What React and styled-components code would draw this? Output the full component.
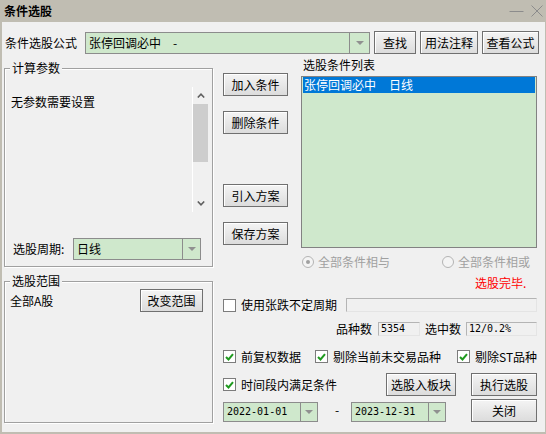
import React from 'react';
import styled, { createGlobalStyle } from 'styled-components';

const Global = createGlobalStyle`
  html, body { margin: 0; padding: 0; background: #c0bdb2; }
  body {
    font-family: "Noto Sans CJK SC", "Liberation Sans", sans-serif;
    font-size: 12px;
    color: #000;
  }
  * { box-sizing: border-box; }
`;

const Window = styled.div`
  width: 546px;
  height: 434px;
  background: #c0bdb2;
  display: flex;
  flex-direction: column;
  padding: 0 1px 2px 2px;
`;

const TitleBar = styled.div`
  height: 22px;
  display: flex;
  align-items: center;
  padding-left: 2px;
  font-weight: bold;
  font-size: 12px;
  line-height: 14px;
`;

const TitleText = styled.span`
  flex: 1;
`;

const TitleControls = styled.div`
  display: flex;
  align-items: center;
  gap: 7px;
  padding-right: 2px;
`;

const Body = styled.div`
  flex: 1;
  background: #f0f0f0;
  display: flex;
  flex-direction: column;
  line-height: 14px;
`;

const FormulaRow = styled.div`
  margin-top: 9px;
  height: 23px;
  display: flex;
  align-items: center;
  padding-left: 3px;
`;

const Label = styled.span`
  white-space: nowrap;
  width: ${p => (p.$w ? `${p.$w}px` : 'auto')};
  margin-left: ${p => p.$ml || 0}px;
  color: ${p => p.$color || '#000'};
`;

const DateDash = styled.span`
  align-self: center;
  margin-left: 17px;
  width: 16px;
  padding-bottom: 2px;
`;

const Btn = styled.div`
  width: ${p => p.$w}px;
  height: ${p => p.$h || 23}px;
  margin-left: ${p => p.$ml || 0}px;
  flex: none;
  border: 1px solid #707070;
  background: linear-gradient(#f4f4f4, #dcdcdc);
  box-shadow: inset 1px 1px 0 #fff;
  display: flex;
  align-items: center;
  justify-content: center;
  white-space: nowrap;
  cursor: default;
`;

const Combo = styled.div`
  width: ${p => p.$w}px;
  height: ${p => p.$h}px;
  margin-left: ${p => p.$ml || 0}px;
  flex: none;
  display: flex;
  border: 1px solid #8c8c8c;
  background: #cfe8cc;
`;

const ComboText = styled.div`
  flex: 1;
  display: flex;
  align-items: center;
  padding-left: ${p => p.$pl || 3}px;
  white-space: nowrap;
  font-family: ${p => (p.$mono ? '"DejaVu Sans Mono", "Liberation Mono", monospace' : 'inherit')};
  font-size: ${p => (p.$mono ? '10px' : '12px')};
`;

const ComboDrop = styled.div`
  width: ${p => p.$w}px;
  border-left: 1px solid #8c8c8c;
  display: flex;
  align-items: center;
  justify-content: center;
`;

const Tri = styled.span`
  width: 0;
  height: 0;
  border-left: 4px solid transparent;
  border-right: 4px solid transparent;
  border-top: 4px solid #909090;
`;

const Main = styled.div`
  margin-top: 3px;
  padding-left: 2px;
  display: grid;
  grid-template-columns: 209px 314px;
  column-gap: 10px;
`;

const LeftCol = styled.div`
  display: flex;
  flex-direction: column;
`;

const Group = styled.div`
  position: relative;
  height: ${p => p.$h}px;
  margin-top: ${p => p.$mt}px;
  border: 1px solid #a0a0a0;
  box-shadow: 1px 1px 0 #fff, inset 1px 1px 0 #fff;
  display: flex;
  flex-direction: column;
`;

const GroupTitle = styled.span`
  position: absolute;
  top: -8px;
  left: 5px;
  padding: 0 2px;
  background: #f0f0f0;
  line-height: 14px;
`;

const ParamRow = styled.div`
  margin-top: 18px;
  height: 125px;
  display: flex;
  padding-left: 6px;
`;

const ParamText = styled.div`
  flex: 1;
  margin-top: 8px;
`;

const ScrollBar = styled.div`
  width: 16px;
  margin-right: 4px;
  border-left: 1px solid #fff;
  display: flex;
  flex-direction: column;
`;

const ScrollArrow = styled.div`
  height: ${p => p.$h}px;
  display: flex;
  align-items: center;
  justify-content: center;
`;

const ScrollThumb = styled.div`
  height: 58px;
  background: #cdcdcd;
`;

const ScrollTrack = styled.div`
  flex: 1;
`;

const PeriodRow = styled.div`
  margin-top: 26px;
  height: 22px;
  display: flex;
  align-items: center;
  padding-left: 8px;
`;

const RangeRow = styled.div`
  margin-top: 7px;
  height: 23px;
  display: flex;
  align-items: center;
  padding-left: 5px;
  padding-right: 9px;
  justify-content: space-between;
`;

const RightCol = styled.div`
  display: flex;
  flex-direction: column;
`;

const ListSection = styled.div`
  height: 191px;
  display: flex;
`;

const ButtonCol = styled.div`
  width: 66px;
  padding-top: 16px;
  display: flex;
  flex-direction: column;
`;

const ColBtnGap = styled.div`
  height: ${p => p.$h}px;
`;

const ListCol = styled.div`
  margin-left: 12px;
  width: 236px;
  display: flex;
  flex-direction: column;
`;

const ListLabel = styled.div`
  height: 15px;
  line-height: 15px;
  padding-left: 2px;
`;

const ListBox = styled.div`
  margin-top: 4px;
  height: 172px;
  border: 1px solid #828282;
  background: #cfe8cc;
  padding: 0 1px;
`;

const ListItem = styled.div`
  height: 16px;
  background: #0078d7;
  color: #fff;
  display: flex;
  align-items: center;
  padding-left: 1px;
  white-space: nowrap;
`;

const Row = styled.div`
  margin-top: ${p => p.$mt || 0}px;
  height: ${p => p.$h || 14}px;
  display: flex;
  align-items: ${p => p.$align || 'center'};
  justify-content: ${p => p.$justify || 'flex-start'};
  padding-left: ${p => p.$pl || 0}px;
`;

const RadioCircle = styled.span`
  width: 12px;
  height: 12px;
  flex: none;
  border-radius: 50%;
  border: 1px solid #b4b4b4;
  background: #f4f4f4;
  display: flex;
  align-items: center;
  justify-content: center;
  margin-left: ${p => p.$ml || 0}px;
`;

const RadioDot = styled.span`
  width: 4px;
  height: 4px;
  border-radius: 50%;
  background: #a0a0a0;
`;

const DisabledText = styled.span`
  color: #a0a0a0;
  margin-left: 4px;
  white-space: nowrap;
`;

const CheckWrap = styled.div`
  display: flex;
  align-items: center;
  margin-left: ${p => p.$ml || 0}px;
  white-space: nowrap;
`;

const CheckBox = styled.span`
  width: 13px;
  height: 13px;
  flex: none;
  border: 1px solid #7c7c7c;
  background: #fff;
  display: flex;
  align-items: center;
  justify-content: center;
  margin-right: 5px;
`;

const Field = styled.div`
  width: ${p => p.$w}px;
  height: 14px;
  margin-left: ${p => (p.$auto ? 'auto' : `${p.$ml || 0}px`)};
  border: 1px solid #b4b4b4;
  border-right-color: #e4e4e4;
  border-bottom-color: #e4e4e4;
  background: #f0f0f0;
  font-family: "DejaVu Sans Mono", "Liberation Mono", monospace;
  font-size: 10px;
  line-height: 12px;
  padding-left: 2px;
  white-space: nowrap;
`;

const Spacer = styled.span`
  flex: ${p => (p.$grow ? 1 : 'none')};
  width: ${p => p.$w || 0}px;
`;

function Check({ checked, children, ml }) {
  return (
    <CheckWrap $ml={ml}>
      <CheckBox>
        {checked && (
          <svg width="9" height="8" viewBox="0 0 9 8">
            <polyline points="1,4 3.5,6.5 8,1.2" fill="none" stroke="#1f9a1f" strokeWidth="2" />
          </svg>
        )}
      </CheckBox>
      {children}
    </CheckWrap>
  );
}

function Chevron({ up }) {
  return (
    <svg width="8" height="5" viewBox="0 0 8 5">
      <polyline
        points={up ? '0.8,4.5 4,1.2 7.2,4.5' : '0.8,0.5 4,3.8 7.2,0.5'}
        fill="none"
        stroke="#606060"
        strokeWidth="1.6"
      />
    </svg>
  );
}

export default function App() {
  return (
    <>
      <Global />
      <Window>
        <TitleBar>
          <TitleText>条件选股</TitleText>
          <TitleControls>
            <svg width="15" height="12" viewBox="0 0 15 12">
              <line x1="0.5" y1="6.5" x2="14.5" y2="6.5" stroke="#8c8c8c" strokeWidth="1" />
            </svg>
            <svg width="12" height="12" viewBox="0 0 12 12">
              <line x1="0.5" y1="0.5" x2="11.5" y2="11.5" stroke="#8c8c8c" strokeWidth="1" />
              <line x1="11.5" y1="0.5" x2="0.5" y2="11.5" stroke="#8c8c8c" strokeWidth="1" />
            </svg>
          </TitleControls>
        </TitleBar>
        <Body>
          <FormulaRow>
            <Label $w={72}>条件选股公式</Label>
            <Combo $w={285} $h={22} $ml={8}>
              <ComboText>
                张停回调必中<Label $ml={12}>-</Label>
              </ComboText>
              <ComboDrop $w={20}><Tri /></ComboDrop>
            </Combo>
            <Btn $w={42} $ml={4}>查找</Btn>
            <Btn $w={58} $ml={4}>用法注释</Btn>
            <Btn $w={57} $ml={4}>查看公式</Btn>
          </FormulaRow>
          <Main>
            <LeftCol>
              <Group $h={199} $mt={11}>
                <GroupTitle>计算参数</GroupTitle>
                <ParamRow>
                  <ParamText>无参数需要设置</ParamText>
                  <ScrollBar>
                    <ScrollArrow $h={17}><Chevron up /></ScrollArrow>
                    <ScrollThumb />
                    <ScrollTrack />
                    <ScrollArrow $h={17}><Chevron /></ScrollArrow>
                  </ScrollBar>
                </ParamRow>
                <PeriodRow>
                  <Label $w={60}>选股周期:</Label>
                  <Combo $w={128} $h={22}>
                    <ComboText>日线</ComboText>
                    <ComboDrop $w={18}><Tri /></ComboDrop>
                  </Combo>
                </PeriodRow>
              </Group>
              <Group $h={142} $mt={14}>
                <GroupTitle>选股范围</GroupTitle>
                <RangeRow>
                  <Label>全部A股</Label>
                  <Btn $w={63}>改变范围</Btn>
                </RangeRow>
              </Group>
            </LeftCol>
            <RightCol>
              <ListSection>
                <ButtonCol>
                  <Btn $w={65}>加入条件</Btn>
                  <ColBtnGap $h={15} />
                  <Btn $w={65}>删除条件</Btn>
                  <ColBtnGap $h={50} />
                  <Btn $w={65}>引入方案</Btn>
                  <ColBtnGap $h={15} />
                  <Btn $w={65}>保存方案</Btn>
                </ButtonCol>
                <ListCol>
                  <ListLabel>选股条件列表</ListLabel>
                  <ListBox>
                    <ListItem>
                      张停回调必中<Label $ml={13} $color="#fff">日线</Label>
                    </ListItem>
                  </ListBox>
                </ListCol>
              </ListSection>
              <Row $mt={7} $pl={79}>
                <RadioCircle><RadioDot /></RadioCircle>
                <DisabledText>全部条件相与</DisabledText>
                <RadioCircle $ml={52} />
                <DisabledText>全部条件相或</DisabledText>
              </Row>
              <Row $mt={7} $pl={252}>
                <Label $color="#ff0000">选股完毕.</Label>
              </Row>
              <Row $mt={8}>
                <Check>使用张跌不定周期</Check>
                <Field $w={191} $auto />
              </Row>
              <Row $mt={10} $justify="flex-end">
                <Label>品种数</Label>
                <Field $w={42} $ml={6}>5354</Field>
                <Label $ml={5}>选中数</Label>
                <Field $w={71} $ml={5}>12/0.2%</Field>
              </Row>
              <Row $mt={14} $h={13}>
                <Check checked>前复权数据</Check>
                <Check checked ml={14}>剔除当前未交易品种</Check>
                <Check checked ml={16}>剔除ST品种</Check>
              </Row>
              <Row $mt={10} $h={23}>
                <Check checked>时间段内满足条件</Check>
                <Spacer $grow />
                <Btn $w={70}>选股入板块</Btn>
                <Btn $w={66} $ml={15}>执行选股</Btn>
              </Row>
              <Row $mt={3} $h={23} $align="flex-end">
                <Combo $w={95} $h={20}>
                  <ComboText $mono>2022-01-01</ComboText>
                  <ComboDrop $w={17}><Tri /></ComboDrop>
                </Combo>
                <DateDash>-</DateDash>
                <Combo $w={95} $h={20}>
                  <ComboText $mono>2023-12-31</ComboText>
                  <ComboDrop $w={17}><Tri /></ComboDrop>
                </Combo>
                <Spacer $grow />
                <Btn $w={66}>关闭</Btn>
              </Row>
            </RightCol>
          </Main>
        </Body>
      </Window>
    </>
  );
}
